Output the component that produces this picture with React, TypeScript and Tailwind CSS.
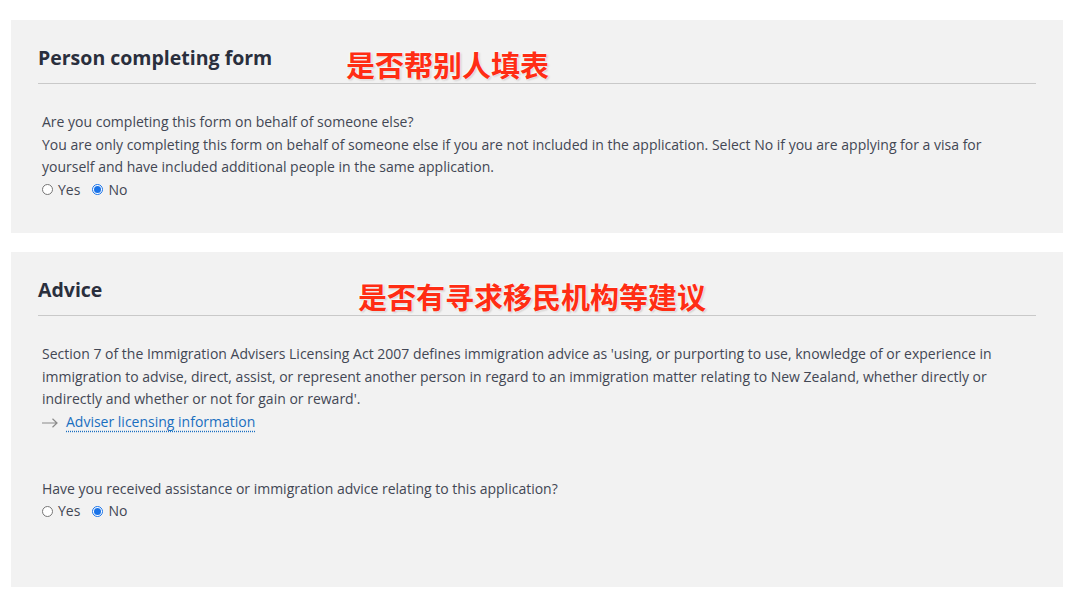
import React from "react";

const body = { fontFamily: '"Open Sans", "Liberation Sans", sans-serif' };
const head = { fontFamily: '"Open Sans", "Liberation Sans", sans-serif' };
const cjk = {
  fontFamily: '"Noto Sans CJK SC", sans-serif',
  textShadow:
    "0 0 2px #fff, 0 0 2px #fff, 1px 1px 2px rgba(0,0,0,0.25), 0 0 3px #fff",
};

function Radio({ checked, label }: { checked?: boolean; label: string }) {
  return (
    <label className="flex items-center gap-[5px]">
      {checked ? (
        <span className="flex h-[11px] w-[11px] items-center justify-center rounded-full border border-[#1a73e8] bg-white">
          <span className="h-[7px] w-[7px] rounded-full bg-[#1a73e8]" />
        </span>
      ) : (
        <span className="h-[11px] w-[11px] rounded-full border border-[#767676] bg-white" />
      )}
      <span>{label}</span>
    </label>
  );
}

function Radios() {
  return (
    <div className="flex h-[22.5px] items-center gap-[12px]">
      <Radio label="Yes" />
      <Radio checked label="No" />
    </div>
  );
}

export default function App() {
  return (
    <div className="min-h-[604px] w-[1073px] bg-white px-[11px] pt-[20px] pb-[18px] text-[#424754]" style={body}>
      <section className="relative w-[1052px] bg-[#f2f2f2] px-[27px] pt-[26px] pb-[32px]">
        <div className="border-b border-[#c9c9c9] pb-[13px]">
          <h2 className="text-[19.5px] leading-[24px] font-bold text-[#2a2f3d]" style={head}>
            Person completing form
          </h2>
        </div>
        <div className="absolute top-[25px] left-[335px] text-[29px] leading-[38px] font-bold text-[#ff2d14]" style={cjk}>
          是否帮别人填表
        </div>
        <div className="pt-[27px] pl-[4px] text-[14px] leading-[22.5px]">
          <p>Are you completing this form on behalf of someone else?</p>
          <p>
            You are only completing this form on behalf of someone else if you are not included in the application. Select No if you are applying for a visa for yourself and have included additional people in the same application.
          </p>
          <Radios />
        </div>
      </section>

      <section className="relative mt-[19px] w-[1052px] bg-[#f2f2f2] px-[27px] pt-[26px] pb-[64px]">
        <div className="border-b border-[#c9c9c9] pb-[13px]">
          <h2 className="text-[19.5px] leading-[24px] font-bold text-[#2a2f3d]" style={head}>
            Advice
          </h2>
        </div>
        <div className="absolute top-[25px] left-[347px] text-[29px] leading-[38px] font-bold text-[#ff2d14]" style={cjk}>
          是否有寻求移民机构等建议
        </div>
        <div className="pt-[27px] pl-[4px] text-[14px] leading-[22.5px]">
          <p>
            Section 7 of the Immigration Advisers Licensing Act 2007 defines immigration advice as 'using, or purporting to use, knowledge of or experience in immigration to advise, direct, assist, or represent another person in regard to an immigration matter relating to New Zealand, whether directly or indirectly and whether or not for gain or reward'.
          </p>
          <div className="flex h-[24px] items-center">
            <svg className="mr-[8px]" width="16" height="10" viewBox="0 0 16 10" fill="none" stroke="#8a8a8a" strokeWidth="1.2">
              <path d="M0 5h15M10.5 0.8L15 5l-4.5 4.2" />
            </svg>
            <a className="text-[#1a6fc0] underline decoration-dotted decoration-[#1a6fc0] underline-offset-[4px]">
              Adviser licensing information
            </a>
          </div>
          <p className="mt-[43px]">Have you received assistance or immigration advice relating to this application?</p>
          <Radios />
        </div>
      </section>
    </div>
  );
}
